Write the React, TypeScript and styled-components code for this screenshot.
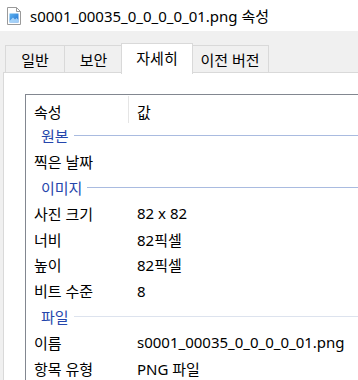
import React from 'react';
import styled, { createGlobalStyle } from 'styled-components';

const GlobalStyle = createGlobalStyle`
    body {
        margin: 0;
        background: #f0f0f0;
        font-family: "Noto Sans", "Noto Sans CJK KR", sans-serif;
        overflow: hidden;
    }
`;

const Window = styled.div`
    width: 358px;
    height: 380px;
    overflow: hidden;
    display: flex;
    flex-direction: column;
`;

const TitleBar = styled.div`
    height: 31px;
    flex-shrink: 0;
    background: #ffffff;
    display: flex;
    align-items: center;
    gap: 9px;
    padding-left: 7px;
    font-size: 15px;
    color: #000;
    white-space: nowrap;
`;

const TabStrip = styled.div`
    display: flex;
    align-items: flex-end;
    padding: 12px 0 0 6px;
    flex-shrink: 0;
`;

const Tab = styled.div<{ $width: number; $active?: boolean }>`
    box-sizing: border-box;
    width: ${(p) => p.$width}px;
    height: ${(p) => (p.$active ? 31 : 28)}px;
    margin: ${(p) => (p.$active ? '0 -1px -1px -2px' : '0 0 0 -1px')};
    background: ${(p) => (p.$active ? '#ffffff' : '#f0f0f0')};
    border: 1px solid #d9d9d9;
    border-bottom: ${(p) => (p.$active ? 'none' : '1px solid #d9d9d9')};
    position: relative;
    z-index: ${(p) => (p.$active ? 2 : 1)};
    display: flex;
    justify-content: center;
    align-items: ${(p) => (p.$active ? 'flex-start' : 'center')};
    padding-top: ${(p) => (p.$active ? 3 : 0)}px;
    font-size: 15px;
    color: #000;
    white-space: nowrap;
`;

const Pane = styled.div`
    flex: 1;
    margin: -1px -10px 0 3px;
    background: #ffffff;
    border: 1px solid #d9d9d9;
    padding: 21px 0 0 21px;
`;

const ListBox = styled.div`
    border: 1px solid #828790;
    border-right: none;
    height: 400px;
    font-size: 15px;
    color: #000;
`;

const HeaderRow = styled.div`
    display: grid;
    grid-template-columns: 103px 1fr;
    height: 28px;
    padding-top: 1px;
    box-sizing: border-box;
`;

const HeaderCell = styled.div<{ $divider?: boolean }>`
    padding: 3px 0 0 8px;
    height: 100%;
    box-sizing: border-box;
    display: flex;
    align-items: center;
    border-right: ${(p) => (p.$divider ? '1px solid #e5e5e5' : 'none')};
`;

const GroupRow = styled.div<{ $faded?: boolean }>`
    display: flex;
    align-items: center;
    gap: 5px;
    height: 25.8px;
    padding-left: 15px;
    color: #2546ac;

    &::after {
        content: '';
        flex: 1;
        height: 1px;
        background: ${(p) => (p.$faded ? '#dde3ee' : '#a9bbe0')};
    }
`;

const ItemRow = styled.div`
    display: grid;
    grid-template-columns: 103px 1fr;
    height: 25.8px;
    align-items: center;
    white-space: nowrap;
`;

const Cell = styled.div`
    padding-left: 8px;
`;

const FileIcon: React.FC = () => (
    <svg width="14" height="18" viewBox="0 0 14 18">
        <path d="M0.5 0.5 H9.5 L13.5 4.5 V17.5 H0.5 Z" fill="#ffffff" stroke="#9a9a9a" />
        <path d="M9.5 0.5 V4.5 H13.5" fill="none" stroke="#9a9a9a" />
        <defs>
            <linearGradient id="pic" x1="0" y1="0" x2="1" y2="1">
                <stop offset="0" stopColor="#5fb4f0" />
                <stop offset="1" stopColor="#1e6fd0" />
            </linearGradient>
        </defs>
        <rect x="2.5" y="6.5" width="9" height="9" fill="url(#pic)" />
        <path d="M2.5 14 L6 10.5 L8 12.5 L9.5 11 L11.5 13 V15.5 H2.5 Z" fill="#bfe3ff" opacity="0.8" />
    </svg>
);

interface Item {
    label: string;
    value?: string;
}

interface Group {
    title: string;
    faded?: boolean;
    items: Item[];
}

const groups: Group[] = [
    { title: '원본', items: [{ label: '찍은 날짜' }] },
    {
        title: '이미지',
        items: [
            { label: '사진 크기', value: '82 x 82' },
            { label: '너비', value: '82픽셀' },
            { label: '높이', value: '82픽셀' },
            { label: '비트 수준', value: '8' },
        ],
    },
    {
        title: '파일',
        faded: true,
        items: [
            { label: '이름', value: 's0001_00035_0_0_0_0_01.png' },
            { label: '항목 유형', value: 'PNG 파일' },
        ],
    },
];

const tabs = [
    { label: '일반', width: 60 },
    { label: '보안', width: 59 },
    { label: '자세히', width: 72, active: true },
    { label: '이전 버전', width: 78 },
];

const App: React.FC = () => {
    return (
        <Window>
            <GlobalStyle />
            <TitleBar>
                <FileIcon />
                <span>s0001_00035_0_0_0_0_01.png 속성</span>
            </TitleBar>

            <TabStrip>
                {tabs.map((tab) => (
                    <Tab key={tab.label} $width={tab.width} $active={tab.active}>
                        {tab.label}
                    </Tab>
                ))}
            </TabStrip>

            <Pane>
                <ListBox>
                    <HeaderRow>
                        <HeaderCell $divider>속성</HeaderCell>
                        <HeaderCell>값</HeaderCell>
                    </HeaderRow>

                    {groups.map((group) => (
                        <React.Fragment key={group.title}>
                            <GroupRow $faded={group.faded}>{group.title}</GroupRow>
                            {group.items.map((item) => (
                                <ItemRow key={item.label}>
                                    <Cell>{item.label}</Cell>
                                    <Cell>{item.value ?? ''}</Cell>
                                </ItemRow>
                            ))}
                        </React.Fragment>
                    ))}
                </ListBox>
            </Pane>
        </Window>
    );
};

export default App;
